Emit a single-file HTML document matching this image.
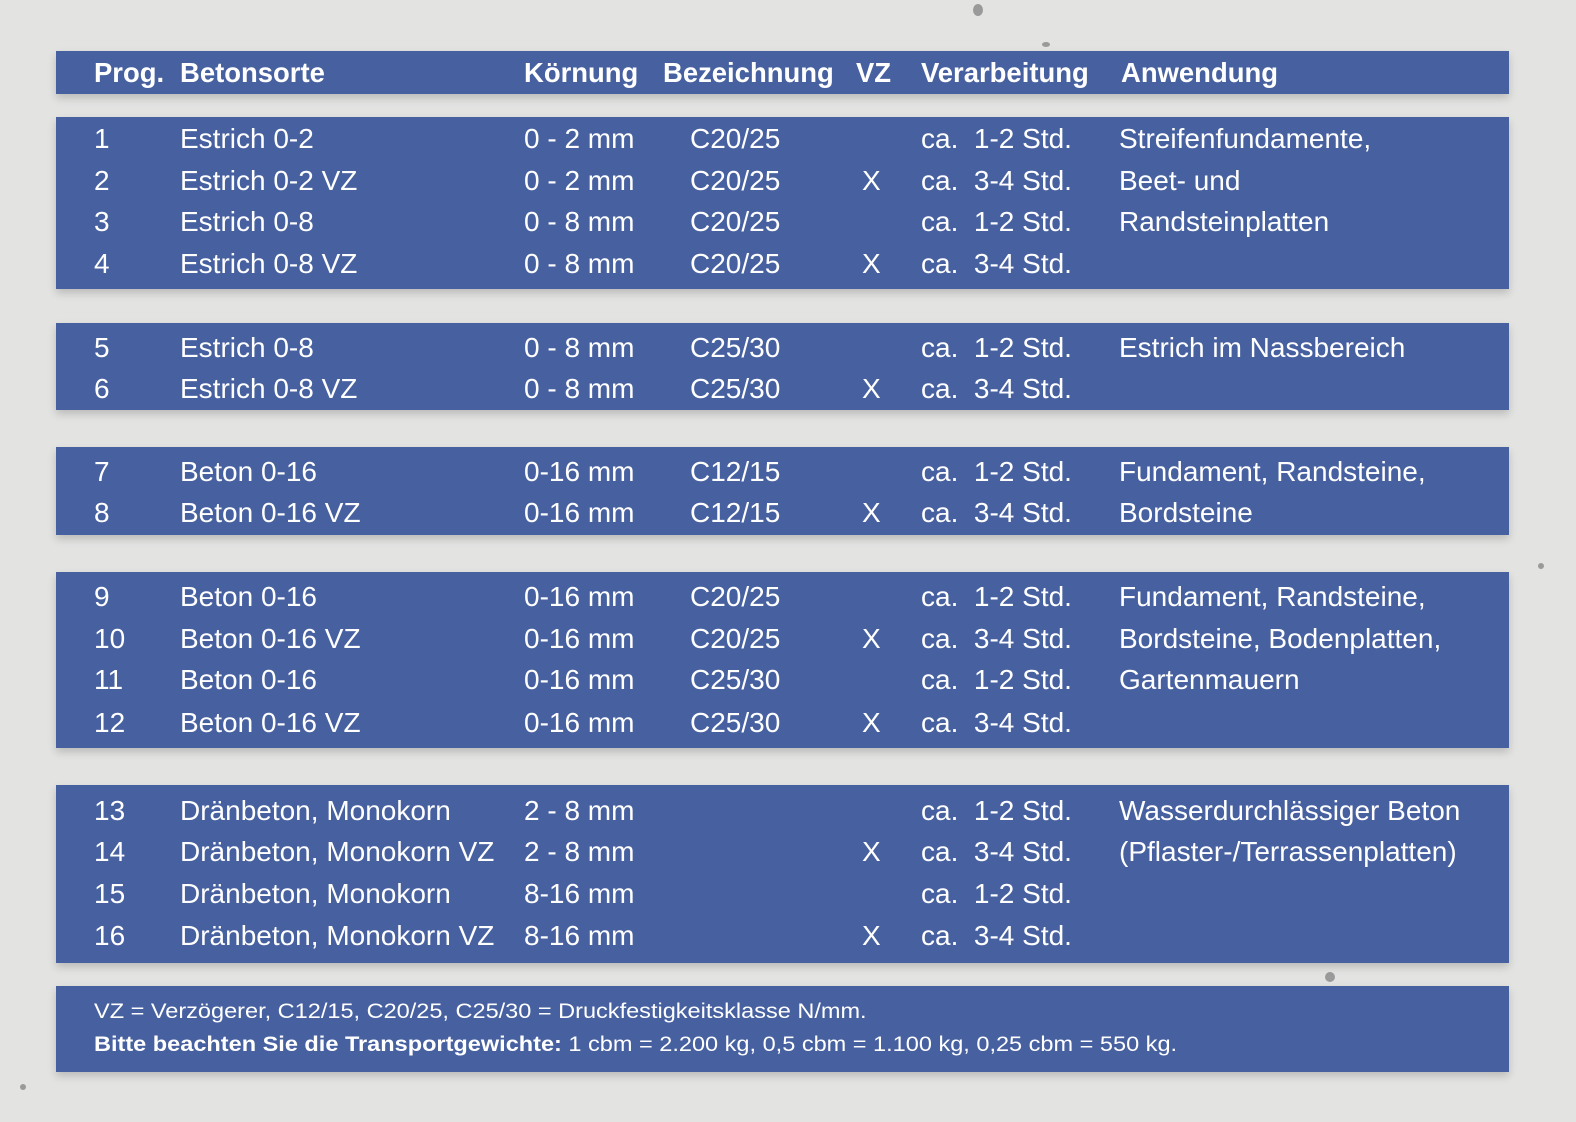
<!DOCTYPE html>
<html><head><meta charset="utf-8"><style>
html,body{margin:0;padding:0}
body{width:1576px;height:1122px;position:relative;overflow:hidden;background:#e3e3e2;font-family:"Liberation Sans",sans-serif;color:#fff}
.bar{position:absolute;left:56px;width:1453px;background:#4761a0;box-shadow:0 4px 8px rgba(0,0,0,0.18)}
.t{position:absolute;font-size:28px;white-space:nowrap;transform:scaleX(1.0);transform-origin:left center;line-height:30px}
.h{font-weight:bold;font-size:28px;transform:scaleX(0.98)}
.f{position:absolute;left:94px;font-size:21px;white-space:nowrap;transform:scaleX(1.12);transform-origin:left center}
.dot{position:absolute;border-radius:50%;background:#9a9a9a}
</style></head><body>
<div class="dot" style="left:973px;top:4px;width:10px;height:12px"></div>
<div class="dot" style="left:1042px;top:42px;width:8px;height:5px"></div>
<div class="dot" style="left:1325px;top:972px;width:10px;height:10px"></div>
<div class="dot" style="left:20px;top:1084px;width:6px;height:6px"></div>
<div class="dot" style="left:1538px;top:563px;width:6px;height:6px"></div>

<div class="bar" style="top:51px;height:43px"></div>
<div class="bar" style="top:117px;height:172px"></div>
<div class="bar" style="top:323px;height:87px"></div>
<div class="bar" style="top:447px;height:88px"></div>
<div class="bar" style="top:572px;height:176px"></div>
<div class="bar" style="top:785px;height:178px"></div>
<div class="bar" style="top:986px;height:86px"></div>

<div class="t h" style="left:94px;top:58px">Prog.</div>
<div class="t h" style="left:180px;top:58px">Betonsorte</div>
<div class="t h" style="left:524px;top:58px">Körnung</div>
<div class="t h" style="left:663px;top:58px">Bezeichnung</div>
<div class="t h" style="left:856px;top:58px">VZ</div>
<div class="t h" style="left:921px;top:58px">Verarbeitung</div>
<div class="t h" style="left:1121px;top:58px">Anwendung</div>

<div id="rows"></div>
<script>
const rows=[
[122,"1","Estrich 0-2","0 - 2 mm","C20/25","","ca.  1-2 Std.","Streifenfundamente,"],
[164,"2","Estrich 0-2 VZ","0 - 2 mm","C20/25","X","ca.  3-4 Std.","Beet- und"],
[205,"3","Estrich 0-8","0 - 8 mm","C20/25","","ca.  1-2 Std.","Randsteinplatten"],
[247,"4","Estrich 0-8 VZ","0 - 8 mm","C20/25","X","ca.  3-4 Std.",""],
[330,"5","Estrich 0-8","0 - 8 mm","C25/30","","ca.  1-2 Std.","Estrich im Nassbereich"],
[371,"6","Estrich 0-8 VZ","0 - 8 mm","C25/30","X","ca.  3-4 Std.",""],
[454,"7","Beton 0-16","0-16 mm","C12/15","","ca.  1-2 Std.","Fundament, Randsteine,"],
[495,"8","Beton 0-16 VZ","0-16 mm","C12/15","X","ca.  3-4 Std.","Bordsteine"],
[578,"9","Beton 0-16","0-16 mm","C20/25","","ca.  1-2 Std.","Fundament, Randsteine,"],
[620,"10","Beton 0-16 VZ","0-16 mm","C20/25","X","ca.  3-4 Std.","Bordsteine, Bodenplatten,"],
[661,"11","Beton 0-16","0-16 mm","C25/30","","ca.  1-2 Std.","Gartenmauern"],
[703,"12","Beton 0-16 VZ","0-16 mm","C25/30","X","ca.  3-4 Std.",""],
[791,"13","Dränbeton, Monokorn","2 - 8 mm","","","ca.  1-2 Std.","Wasserdurchlässiger Beton"],
[832,"14","Dränbeton, Monokorn VZ","2 - 8 mm","","X","ca.  3-4 Std.","(Pflaster-/Terrassenplatten)"],
[874,"15","Dränbeton, Monokorn","8-16 mm","","","ca.  1-2 Std.",""],
[915,"16","Dränbeton, Monokorn VZ","8-16 mm","","X","ca.  3-4 Std.",""]];
const xs=[94,180,524,690,862,921,1119];
let h="";
for(const r of rows){const top=Math.round(r[0]*1.005)+1;for(let i=0;i<7;i++){if(r[i+1])h+=`<div class="t" style="left:${xs[i]}px;top:${top}px">${r[i+1].replace(/  /g,"&nbsp; ")}</div>`;}}
document.getElementById("rows").innerHTML=h;
</script>

<div class="f" style="top:1000px">VZ = Verzögerer, C12/15, C20/25, C25/30 = Druckfestigkeitsklasse N/mm.</div>
<div class="f" style="top:1033px"><b>Bitte beachten Sie die Transportgewichte:</b> 1 cbm = 2.200 kg, 0,5 cbm = 1.100 kg, 0,25 cbm = 550 kg.</div>
</body></html>
